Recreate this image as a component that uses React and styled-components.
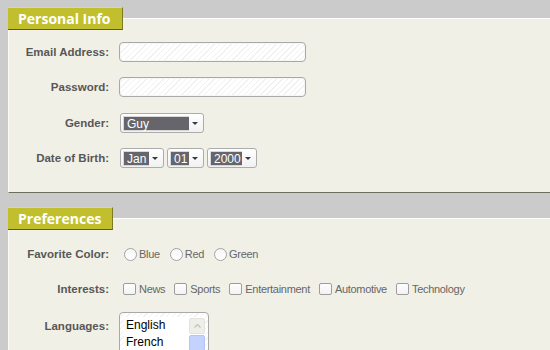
import styled, { createGlobalStyle } from "styled-components";

const GlobalStyle = createGlobalStyle`
  html, body {
    margin: 0;
    background: #cbcbcb;
  }
  body {
    font-family: "Liberation Sans", Arial, sans-serif;
  }
`;

const Page = styled.div`
  display: flex;
  flex-direction: column;
  padding: 7px 0 0 8px;
  height: 350px;
  overflow: hidden;
  box-sizing: border-box;
`;

const Section = styled.section`
  display: flex;
  flex-direction: column;
  margin-bottom: 14px;
`;

const TabRow = styled.div`
  display: flex;
  align-items: flex-start;
`;

const Tab = styled.h2`
  margin: 0;
  box-sizing: border-box;
  height: 23px;
  padding: 0 11px 0 10px;
  display: flex;
  align-items: center;
  background: #c1bf2e;
  border-top: 1px solid #dcdb8a;
  border-right: 1px solid #7c7b22;
  border-bottom: 1px solid #5f5e18;
  color: #fff;
  font-family: "Open Sans", "DejaVu Sans", sans-serif;
  font-weight: 700;
  font-size: 14px;
  line-height: 1;
`;

const TabLine = styled.div`
  flex: 1;
  margin-top: 11px;
  height: 11px;
  background: #f1f0e6;
  border-top: 1px solid #ffffff;
`;

const Panel = styled.div`
  display: flex;
  flex-direction: column;
  gap: 15px;
  background: #f1f0e6;
  border-left: 1px solid #fbfbf5;
  padding: ${({ $top }) => $top}px 0 24px 0;
  border-bottom: ${({ $closed }) => ($closed ? "1px solid #6c6d5f" : "none")};
`;

const Row = styled.div`
  display: flex;
  align-items: ${({ $top }) => ($top ? "flex-start" : "center")};
  gap: 10px;
  min-height: 20px;
  margin-top: ${({ $push }) => ($push ? "1px" : "0")};
`;

const Label = styled.label`
  width: 100px;
  flex-shrink: 0;
  text-align: right;
  font-size: 11.5px;
  font-weight: 700;
  color: #575757;
  line-height: ${({ $tall }) => ($tall ? "20px" : "normal")};
  margin-top: ${({ $tall }) => ($tall ? "2px" : "0")};
`;

const hatch = `repeating-linear-gradient(135deg, #ffffff 0px, #ffffff 3px, #f1f1f1 3px, #f1f1f1 4px)`;

const TextInput = styled.input`
  box-sizing: border-box;
  width: 187px;
  height: 20px;
  border: 1px solid #a9a9a9;
  border-radius: 4px;
  background: ${hatch};
  box-shadow: inset 0 0 0 1px #f6f6f6;
  padding: 0 4px;
  outline: none;
`;

const Selects = styled.div`
  display: flex;
  gap: 3px;
  margin-left: 1px;
`;

const Select = styled.div`
  box-sizing: border-box;
  display: inline-flex;
  align-items: center;
  height: 20px;
  padding: 0 2px;
  border: 1px solid #acacac;
  border-radius: 3px;
  background: linear-gradient(#ffffff, #f1f1f1);
`;

const Value = styled.span`
  box-sizing: border-box;
  width: ${({ $w }) => $w}px;
  height: 15px;
  padding: 0 3px;
  background: #65656b;
  color: #fff;
  font-size: 12px;
  line-height: 14px;
  border: 1px solid #d8d8d8;
  border-right: none;
`;

const Arrow = styled.span`
  width: 12px;
  display: flex;
  justify-content: center;
  align-items: center;
  &::after {
    content: "";
    border-left: 3px solid transparent;
    border-right: 3px solid transparent;
    border-top: 3px solid #333a48;
  }
`;

const Choices = styled.div`
  display: flex;
  align-items: center;
  padding-left: ${({ $pad }) => $pad}px;
`;

const Choice = styled.label`
  display: flex;
  align-items: center;
  gap: ${({ $gap }) => $gap}px;
  margin-right: ${({ $space }) => $space}px;
  font-size: 11px;
  letter-spacing: -0.3px;
  color: #666;
`;

const Radio = styled.span`
  box-sizing: border-box;
  width: 13px;
  height: 13px;
  border-radius: 50%;
  border: 1px solid #a3a3a3;
  background: linear-gradient(#f6f6f6, #ffffff);
`;

const Check = styled.span`
  box-sizing: border-box;
  width: 13px;
  height: 12px;
  border-radius: 2px;
  border: 1px solid #9d9d9d;
  background: linear-gradient(#fdfdfd, #f3f3f3);
`;

const ListBox = styled.div`
  box-sizing: border-box;
  width: 90px;
  height: 60px;
  margin-top: -2px;
  padding: 4px 3px 0 4px;
  border: 1px solid #a9a9a9;
  border-radius: 4px;
  background: ${hatch};
  display: flex;
`;

const Options = styled.div`
  flex: 1;
  background: #fff;
  padding-left: 2px;
  font-size: 12px;
  color: #000;
  line-height: 17px;
`;

const Scroll = styled.div`
  width: 17px;
  background: #fff;
  display: flex;
  flex-direction: column;
  gap: 1px;
  padding: 1px 0 0 1px;
  box-sizing: border-box;
`;

const ScrollButton = styled.div`
  box-sizing: border-box;
  height: 16px;
  border: 1px solid #e3e3dc;
  border-radius: 2px;
  background: #efefe9;
  display: flex;
  align-items: center;
  justify-content: center;
`;

const Thumb = styled.div`
  flex: 1;
  border: 1px solid #b4c6f6;
  border-radius: 2px;
  background: #c3d3fd;
`;

export default function App() {
  return (
    <>
      <GlobalStyle />
      <Page>
        <Section>
          <TabRow>
            <Tab>Personal Info</Tab>
            <TabLine />
          </TabRow>
          <Panel $top={12} $closed>
            <Row>
              <Label>Email Address:</Label>
              <TextInput />
            </Row>
            <Row>
              <Label>Password:</Label>
              <TextInput type="password" />
            </Row>
            <Row $push>
              <Label>Gender:</Label>
              <Selects>
                <Select>
                  <Value $w={66}>Guy</Value>
                  <Arrow />
                </Select>
              </Selects>
            </Row>
            <Row>
              <Label>Date of Birth:</Label>
              <Selects>
                <Select>
                  <Value $w={26}>Jan</Value>
                  <Arrow />
                </Select>
                <Select>
                  <Value $w={19}>01</Value>
                  <Arrow />
                </Select>
                <Select>
                  <Value $w={32}>2000</Value>
                  <Arrow />
                </Select>
              </Selects>
            </Row>
          </Panel>
        </Section>
        <Section>
          <TabRow>
            <Tab>Preferences</Tab>
            <TabLine />
          </TabRow>
          <Panel $top={14}>
            <Row>
              <Label>Favorite Color:</Label>
              <Choices $pad={5}>
                {["Blue", "Red", "Green"].map((c) => (
                  <Choice key={c} $gap={2} $space={10}>
                    <Radio />
                    {c}
                  </Choice>
                ))}
              </Choices>
            </Row>
            <Row>
              <Label>Interests:</Label>
              <Choices $pad={4}>
                {["News", "Sports", "Entertainment", "Automotive", "Technology"].map((c) => (
                  <Choice key={c} $gap={3} $space={9}>
                    <Check />
                    {c}
                  </Choice>
                ))}
              </Choices>
            </Row>
            <Row $top>
              <Label $tall>Languages:</Label>
              <ListBox>
                <Options>
                  <div>English</div>
                  <div>French</div>
                </Options>
                <Scroll>
                  <ScrollButton>
                    <svg width="7" height="4" viewBox="0 0 7 4">
                      <path d="M0.5 3.5 L3.5 0.5 L6.5 3.5" fill="none" stroke="#c2c2b8" strokeWidth="1.3" />
                    </svg>
                  </ScrollButton>
                  <Thumb />
                </Scroll>
              </ListBox>
            </Row>
          </Panel>
        </Section>
      </Page>
    </>
  );
}
